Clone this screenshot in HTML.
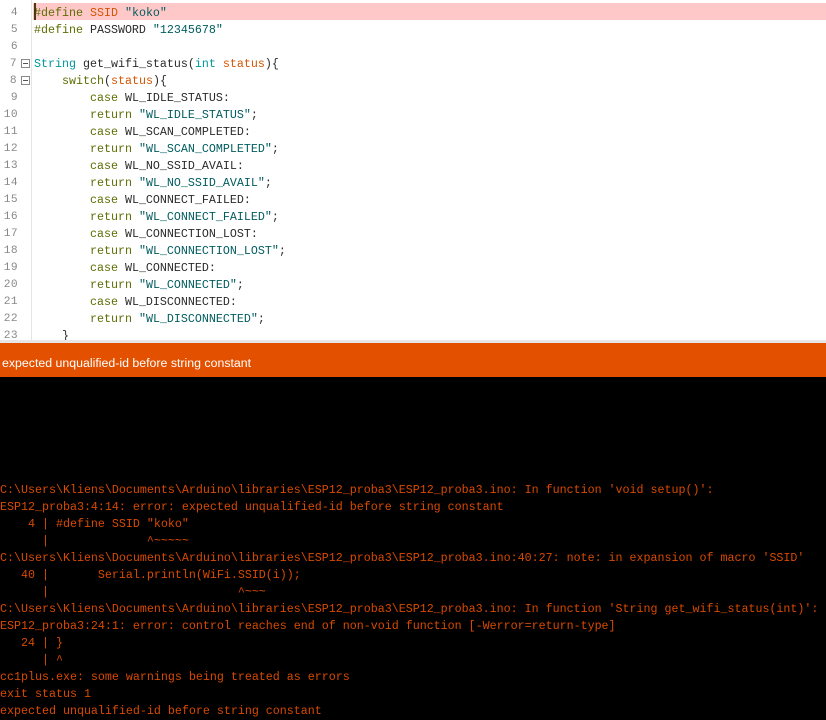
<!DOCTYPE html>
<html>
<head>
<meta charset="utf-8">
<style>
html,body{margin:0;padding:0;background:#000}
#root{position:relative;width:826px;height:720px;overflow:hidden;background:#000}
#ed{position:absolute;left:0;top:0;width:826px;height:340px;background:#fff;overflow:hidden}
#hl{position:absolute;left:33px;top:3px;width:793px;height:17px;background:#ffc8c8}
#caret{position:absolute;left:34px;top:3px;width:2px;height:17px;background:#4a3a10}
#sep{position:absolute;left:31px;top:0;width:1px;height:340px;background:#e4e4e4}
.l,.n{position:absolute;font-family:"Liberation Mono",monospace;font-size:11.67px;line-height:17px;height:17px;white-space:pre;margin-top:2px}
.l{left:34px;color:#2a2a2a}
.n{left:0;width:18px;text-align:right;color:#888;font-size:11.2px;letter-spacing:.4px}
.k{color:#5e6d03}.t{color:#00979c}.s{color:#005c5f}.r{color:#d35400}
.f{position:absolute;left:21px;width:9px;height:9px;border:1px solid #888;box-sizing:border-box;background:#fff}
.f:after{content:"";position:absolute;left:1px;top:3px;width:5px;height:1px;background:#555}
#gray{position:absolute;left:0;top:340px;width:826px;height:3px;background:#e6e6e6}
#bar{position:absolute;left:0;top:343px;width:826px;height:34px;background:#e35100;color:#fff;font-family:"Liberation Sans",sans-serif;font-size:12.35px;line-height:40px;padding-left:2px;box-sizing:border-box;white-space:pre}
.e{position:absolute;left:0;font-family:"Liberation Mono",monospace;font-size:11.67px;line-height:17px;height:17px;white-space:pre;color:#d84a00}
</style>
</head>
<body>
<div id="root">
<div id="ed">
<div id="hl"></div>
<div id="sep"></div>
<div class="n" style="top:3px">4</div><div class="l" style="top:3px"><span class="k">#define</span> <span class="r">SSID</span> <span class="s">"koko"</span></div>
<div class="n" style="top:20px">5</div><div class="l" style="top:20px"><span class="k">#define</span> PASSWORD <span class="s">"12345678"</span></div>
<div class="n" style="top:37px">6</div>
<div class="n" style="top:54px;width:17px">7</div><div class="f" style="top:59px"></div><div class="l" style="top:54px"><span class="t">String</span> get_wifi_status(<span class="t">int</span> <span class="r">status</span>){</div>
<div class="n" style="top:71px;width:17px">8</div><div class="f" style="top:76px"></div><div class="l" style="top:71px">    <span class="k">switch</span>(<span class="r">status</span>){</div>
<div class="n" style="top:88px">9</div><div class="l" style="top:88px">        <span class="k">case</span> WL_IDLE_STATUS:</div>
<div class="n" style="top:105px">10</div><div class="l" style="top:105px">        <span class="k">return</span> <span class="s">"WL_IDLE_STATUS"</span>;</div>
<div class="n" style="top:122px">11</div><div class="l" style="top:122px">        <span class="k">case</span> WL_SCAN_COMPLETED:</div>
<div class="n" style="top:139px">12</div><div class="l" style="top:139px">        <span class="k">return</span> <span class="s">"WL_SCAN_COMPLETED"</span>;</div>
<div class="n" style="top:156px">13</div><div class="l" style="top:156px">        <span class="k">case</span> WL_NO_SSID_AVAIL:</div>
<div class="n" style="top:173px">14</div><div class="l" style="top:173px">        <span class="k">return</span> <span class="s">"WL_NO_SSID_AVAIL"</span>;</div>
<div class="n" style="top:190px">15</div><div class="l" style="top:190px">        <span class="k">case</span> WL_CONNECT_FAILED:</div>
<div class="n" style="top:207px">16</div><div class="l" style="top:207px">        <span class="k">return</span> <span class="s">"WL_CONNECT_FAILED"</span>;</div>
<div class="n" style="top:224px">17</div><div class="l" style="top:224px">        <span class="k">case</span> WL_CONNECTION_LOST:</div>
<div class="n" style="top:241px">18</div><div class="l" style="top:241px">        <span class="k">return</span> <span class="s">"WL_CONNECTION_LOST"</span>;</div>
<div class="n" style="top:258px">19</div><div class="l" style="top:258px">        <span class="k">case</span> WL_CONNECTED:</div>
<div class="n" style="top:275px">20</div><div class="l" style="top:275px">        <span class="k">return</span> <span class="s">"WL_CONNECTED"</span>;</div>
<div class="n" style="top:292px">21</div><div class="l" style="top:292px">        <span class="k">case</span> WL_DISCONNECTED:</div>
<div class="n" style="top:309px">22</div><div class="l" style="top:309px">        <span class="k">return</span> <span class="s">"WL_DISCONNECTED"</span>;</div>
<div class="n" style="top:326px">23</div><div class="l" style="top:326px">    }</div>
<div id="caret"></div>
</div>
<div id="gray"></div>
<div id="bar">expected unqualified-id before string constant</div>
<div class="e" style="top:482px">C:\Users\Kliens\Documents\Arduino\libraries\ESP12_proba3\ESP12_proba3.ino: In function 'void setup()':</div>
<div class="e" style="top:499px">ESP12_proba3:4:14: error: expected unqualified-id before string constant</div>
<div class="e" style="top:516px">    4 | #define SSID "koko"</div>
<div class="e" style="top:533px">      |              ^~~~~~</div>
<div class="e" style="top:550px">C:\Users\Kliens\Documents\Arduino\libraries\ESP12_proba3\ESP12_proba3.ino:40:27: note: in expansion of macro 'SSID'</div>
<div class="e" style="top:567px">   40 |       Serial.println(WiFi.SSID(i));</div>
<div class="e" style="top:584px">      |                           ^~~~</div>
<div class="e" style="top:601px">C:\Users\Kliens\Documents\Arduino\libraries\ESP12_proba3\ESP12_proba3.ino: In function 'String get_wifi_status(int)':</div>
<div class="e" style="top:618px">ESP12_proba3:24:1: error: control reaches end of non-void function [-Werror=return-type]</div>
<div class="e" style="top:635px">   24 | }</div>
<div class="e" style="top:652px">      | ^</div>
<div class="e" style="top:669px">cc1plus.exe: some warnings being treated as errors</div>
<div class="e" style="top:686px">exit status 1</div>
<div class="e" style="top:703px">expected unqualified-id before string constant</div>
</div>
</body>
</html>
